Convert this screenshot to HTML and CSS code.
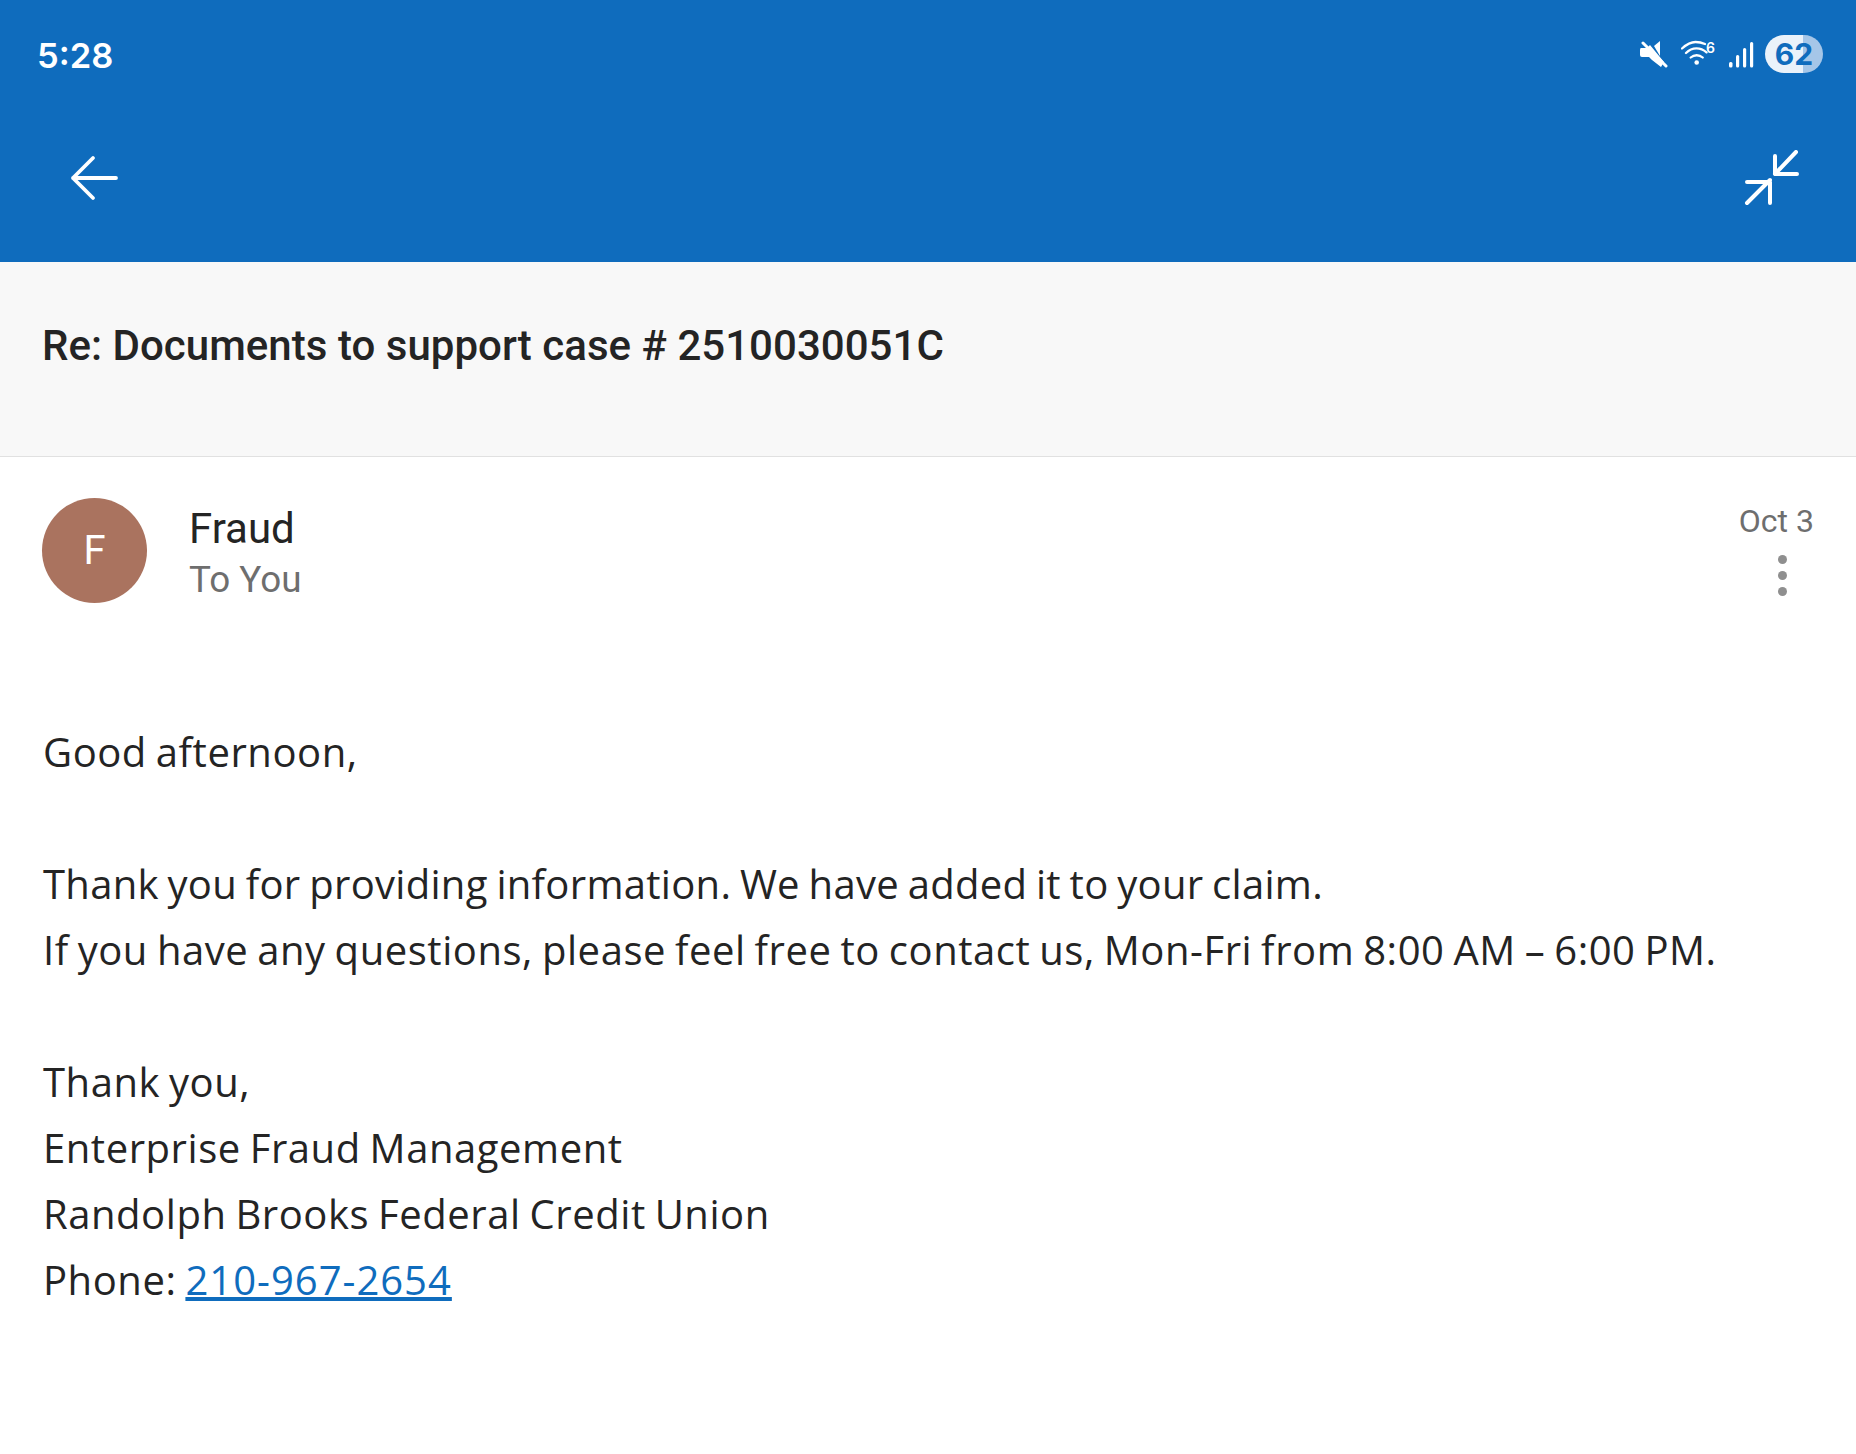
FILE: index.html
```html
<!DOCTYPE html>
<html lang="en">

<head>
  <meta charset="UTF-8" />
  <meta name="viewport" content="width=device-width, initial-scale=1.0">
  <title>Re: Documents to support case</title>
  <link rel="stylesheet" href="styles.css">
</head>

<body>
  <header class="app-header">
    <div class="status-bar">
      <span class="time">5:28</span>
      <div class="status-icons">
        <svg class="icon-mute" width="28" height="27" viewBox="0 0 28 27">
          <path d="M1 7h6l3-3 14 17-3 5-9-7-3-3H2q-2 0-2-2V9q0-2 1-2z" fill="#fff" />
          <path d="M14 5l6-5v15z" fill="#fff" />
          <path d="M3 2l23 23" stroke="#fff" stroke-width="3" stroke-linecap="round" />
        </svg>
        <svg class="icon-wifi" width="36" height="30" viewBox="0 -2 36 30">
          <path d="M1 7.5C6 3 10 1 14.5 1 18 1 21 1.7 24 3M5 12c3-3 7-4.600 10.500-4.600 3.500 0 7 1.300 10 4M9.700 16.500c3.500-3 8.500-3 12 0" fill="none" stroke="#fff" stroke-width="2.300" stroke-linecap="round" />
          <circle cx="15.700" cy="21.500" r="2.300" fill="#fff" />
          <text x="25" y="12" class="wifi-six">6</text>
        </svg>
        <svg class="icon-signal" width="26" height="27" viewBox="0 0 26 27">
          <rect x="0" y="21" width="3.500" height="5.500" rx="1.500" fill="#fff" />
          <rect x="7" y="14" width="3.200" height="12.500" rx="1.500" fill="#fff" />
          <rect x="14" y="7" width="3.200" height="19.500" rx="1.500" fill="#fff" />
          <rect x="21" y="1" width="3.200" height="25.500" rx="1.500" fill="#fff" />
        </svg>
        <div class="battery">62</div>
      </div>
    </div>
    <div class="toolbar">
      <svg width="52" height="46" viewBox="0 0 52 46">
        <path d="M25 3L5 23l20 20M5 23h43" fill="none" stroke="#fff" stroke-width="3.800" stroke-linecap="round" stroke-linejoin="round" />
      </svg>
      <svg width="56" height="56" viewBox="0 0 56 56">
        <path d="M52 2L31 24M31 6v18h22M3 53l23-23M3 32h23v21" fill="none" stroke="#fff" stroke-width="4" stroke-linecap="round" stroke-linejoin="round" />
      </svg>
    </div>
  </header>

  <section class="subject">
    <h1>Re: Documents to support case # 2510030051C</h1>
  </section>

  <section class="sender">
    <div class="avatar">F</div>
    <div class="sender-text">
      <div class="sender-name">Fraud</div>
      <div class="sender-to">To You</div>
    </div>
    <div class="sender-meta">
      <div class="date">Oct 3</div>
      <div class="more">
        <i></i>
        <i></i>
        <i></i>
      </div>
    </div>
  </section>

  <main class="message">
    <p>Good afternoon,</p>
    <p><span class="tight">Thank you for providing information. We have added it to your claim.</span><br>
      If you have any questions, please feel free to contact us, Mon-Fri from 8:00 AM – 6:00 PM.</p>
    <p>Thank you,<br>
      Enterprise Fraud Management<br>
      Randolph Brooks Federal Credit Union<br>
      Phone: <a href="#">210-967-2654</a></p>
  </main>
</body>

</html>
```

FILE: styles.css
```css
body {
  margin: 0;
  padding: 0;
  background-color: #fff;
  font-family: 'Roboto', sans-serif;
  color: #242424;
}

.app-header {
  height: 262px;
  background-color: #0f6cbd;
  color: #fff;
}

.status-bar {
  display: flex;
  justify-content: space-between;
  align-items: center;
  height: 110px;
  padding: 0 33px 0 37px;
}

.time {
  font-family: 'Inter', sans-serif;
  font-size: 34.500px;
  font-weight: 600;
}

.status-icons {
  display: flex;
  align-items: center;
  margin-bottom: 2px;
}

.icon-mute {
  margin-right: 13px;
}

.icon-wifi {
  margin-right: 12px;
}

.icon-signal {
  margin-right: 10px;
}

.wifi-six {
  font-family: 'Inter', sans-serif;
  font-size: 14px;
  font-weight: 600;
  fill: #fff;
}

.battery {
  width: 58px;
  height: 38px;
  border-radius: 19px;
  background: linear-gradient(to right, #eaf2fa 65%, #a5c6e8 65%);
  color: #0f6cbd;
  font-family: 'Inter', sans-serif;
  font-size: 30px;
  font-weight: 700;
  line-height: 38px;
  text-align: center;
}

.toolbar {
  display: flex;
  justify-content: space-between;
  align-items: center;
  height: 136px;
  padding: 0 56px 0 68px;
}

.subject {
  height: 195px;
  box-sizing: border-box;
  padding: 59px 42px 0;
  background-color: #f8f8f8;
  border-bottom: 1px solid #e1e1e1;
}

.subject h1 {
  margin: 0;
  font-size: 42px;
  font-weight: 500;
  letter-spacing: 0.030px;
  line-height: 50px;
}

.sender {
  display: flex;
  padding: 41px 42px 0 42px;
}

.avatar {
  width: 105px;
  height: 105px;
  border-radius: 50%;
  background-color: #aa735f;
  color: #fff;
  font-size: 40px;
  line-height: 105px;
  text-align: center;
}

.sender-text {
  flex: 1;
  margin-left: 42px;
  padding-top: 6px;
}

.sender-name {
  font-size: 42px;
  line-height: 50px;
}

.sender-to {
  font-size: 36.800px;
  line-height: 51px;
  color: #6e6e6e;
}

.sender-meta {
  display: flex;
  flex-direction: column;
  align-items: flex-end;
  padding-top: 4px;
}

.date {
  font-size: 32px;
  line-height: 38px;
  color: #6e6e6e;
}

.more {
  display: flex;
  flex-direction: column;
  gap: 7px;
  margin: 15px 27px 0 0;
}

.more i {
  width: 9px;
  height: 9px;
  border-radius: 50%;
  background-color: #8f8f8f;
}

.message {
  padding: 114px 43px 0;
  font-family: 'Open Sans', sans-serif;
  font-size: 40px;
  letter-spacing: 0.550px;
  word-spacing: -2px;
  line-height: 66px;
}

.message p {
  margin: 0 0 66px;
}

.message .tight {
  letter-spacing: 0.300px;
}

.message a {
  color: #0f6cbd;
  letter-spacing: 1px;
}
```
